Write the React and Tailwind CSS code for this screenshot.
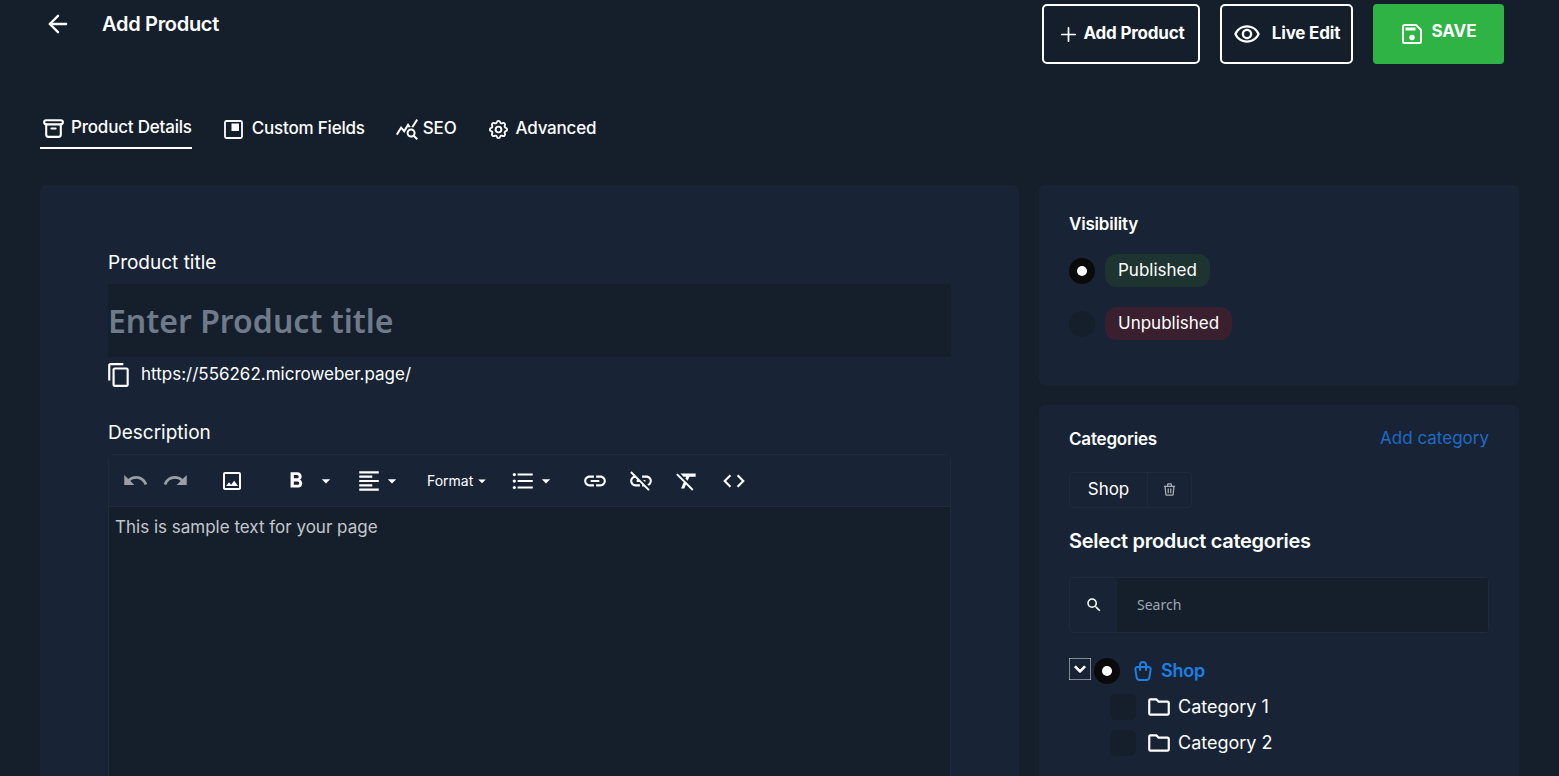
import React from "react";
import { ArrowLeft, Plus } from "lucide-react";
import {
  TbArchive,
  TbSettings,
  TbTrash,
  TbShoppingBag,
} from "react-icons/tb";
import {
  MdOutlineRemoveRedEye,
  MdQueryStats,
  MdOutlineContentCopy,
  MdUndo,
  MdRedo,
  MdOutlineImage,
  MdFormatBold,
  MdFormatAlignLeft,
  MdFormatListBulleted,
  MdLink,
  MdLinkOff,
  MdFormatClear,
  MdCode,
  MdSearch,
  MdOutlineFolder,
  MdKeyboardArrowDown,
  MdArrowDropDown,
} from "react-icons/md";

function SaveIcon() {
  return (
    <svg width="24" height="24" viewBox="0 0 24 24" fill="none" stroke="currentColor" strokeWidth="2">
      <path d="M3 4.5A1.5 1.5 0 0 1 4.500 3H16l5 5v11.500a1.500 1.500 0 0 1-1.500 1.500h-15A1.500 1.500 0 0 1 3 19.500z" />
      <rect x="5.500" y="5.500" width="10" height="3" fill="currentColor" stroke="none" />
      <circle cx="12" cy="15.500" r="2.700" fill="currentColor" stroke="none" />
    </svg>
  );
}

function FieldsIcon() {
  return (
    <svg width="19" height="19" viewBox="0 0 19 19" fill="none">
      <rect x="1" y="1" width="17" height="17" rx="1.500" stroke="currentColor" strokeWidth="1.800" />
      <rect x="7.500" y="3.500" width="7.500" height="7.500" fill="currentColor" />
    </svg>
  );
}

function Tab({ icon, label, active, gap }) {
  return (
    <div className={`flex h-[40px] items-center ${gap} ${active ? "border-b-2 border-white" : ""}`}>
      {icon}
      <span className="text-[17px] font-medium tracking-[-0.2px] text-white">{label}</span>
    </div>
  );
}

function Sep() {
  return <span className="h-[20px] w-px bg-[#22314a]" />;
}

function Radio({ checked }) {
  return (
    <span className={`flex h-[26px] w-[26px] shrink-0 items-center justify-center rounded-full ${checked ? "bg-[#0a0a0a]" : "bg-[#151f2b]"}`}>
      {checked && <span className="h-[10px] w-[10px] rounded-full bg-white" />}
    </span>
  );
}

function SubCategory({ label }) {
  return (
    <div className="flex h-[36px] items-center pl-[41px]">
      <span className="h-[26px] w-[26px] rounded-md bg-[#151f2b]" />
      <MdOutlineFolder className="ml-[10px] text-white" size={26} />
      <span className="ml-[6px] text-[18px] text-white">{label}</span>
    </div>
  );
}

export default function App() {
  return (
    <div className="h-[776px] overflow-hidden bg-[#151f2c] font-['Inter',sans-serif] text-white">
      {/* Header */}
      <div className="flex justify-between pl-[44px] pr-[55px] pt-1">
        <div className="flex h-[40px] items-center">
          <ArrowLeft size={28} strokeWidth={2} />
          <h1 className="ml-[30px] text-[20px] font-semibold tracking-[-0.3px]">Add Product</h1>
        </div>
        <div className="flex gap-5">
          <button className="flex h-[60px] w-[158px] items-center justify-center gap-[3px] rounded-[5px] border-2 border-white text-[17px] font-bold tracking-[-0.2px]">
            <Plus size={23} strokeWidth={1.800} />
            Add Product
          </button>
          <button className="flex h-[60px] w-[133px] items-center justify-center gap-[11px] rounded-[5px] border-2 border-white text-[17px] font-bold tracking-[-0.2px]">
            <MdOutlineRemoveRedEye size={28} />
            Live Edit
          </button>
          <button className="flex h-[60px] w-[131px] items-center justify-center gap-[7px] rounded-[4px] bg-[#2fb344] text-[17px] font-bold">
            <SaveIcon />
            <span className="-translate-y-[2px]">SAVE</span>
          </button>
        </div>
      </div>

      {/* Tabs */}
      <div className="mt-[45px] flex items-start pl-10">
        <Tab icon={<TbArchive size={25} />} label="Product Details" active gap="gap-[5px] pl-[1px]" />
        <div className="ml-[32px]">
          <Tab icon={<FieldsIcon />} label="Custom Fields" gap="gap-[9px]" />
        </div>
        <div className="ml-[30px]">
          <Tab icon={<MdQueryStats size={24} />} label="SEO" gap="gap-[4px]" />
        </div>
        <div className="ml-[31px]">
          <Tab icon={<TbSettings size={23} />} label="Advanced" gap="gap-[5px]" />
        </div>
      </div>

      {/* Main */}
      <div className="mt-[36px] flex gap-5 px-10">
        <div className="h-[700px] w-[979px] rounded-md bg-[#182435] px-[68px] pt-[64px]">
          <p className="text-[19px] leading-[28px]">Product title</p>
          <div className="mt-[7px] flex h-[73px] items-center bg-[#151f2b]">
            <span className="font-['Noto_Sans',sans-serif] text-[32px] font-semibold text-[#6f7b8a]">Enter Product title</span>
          </div>
          <div className="mt-[3px] flex h-[30px] items-center">
            <MdOutlineContentCopy size={26} className="-ml-[2px]" />
            <span className="ml-[9px] text-[17px]">https://556262.microweber.page/</span>
          </div>
          <p className="mt-[29px] text-[19px] leading-[28px]">Description</p>

          <div className="mt-[7px] h-[500px] rounded-t-md border border-[#1e2b3f]">
            <div className="flex h-[52px] items-center border-b border-[#1e2b3f] bg-[#182435] text-white">
              <MdUndo size={27} className="ml-[13px] text-[#9a9fa6]" />
              <MdRedo size={27} className="ml-[13px] text-[#9a9fa6]" />
              <span className="ml-[13px]"><Sep /></span>
              <MdOutlineImage size={24} className="ml-[18px]" />
              <span className="ml-[15px]"><Sep /></span>
              <MdFormatBold size={26} className="ml-[24px]" />
              <MdArrowDropDown size={20} className="ml-[7px]" />
              <span className="ml-[13px]"><Sep /></span>
              <MdFormatAlignLeft size={26} className="ml-[7px]" />
              <MdArrowDropDown size={20} />
              <span className="ml-[9px]"><Sep /></span>
              <span className="ml-[16px] text-[14px]">Format</span>
              <MdArrowDropDown size={18} />
              <MdFormatListBulleted size={26} className="ml-[19px]" />
              <MdArrowDropDown size={20} />
              <span className="ml-[9px]"><Sep /></span>
              <MdLink size={26} className="ml-[17px]" />
              <MdLinkOff size={26} className="ml-[20px]" />
              <MdFormatClear size={26} className="ml-[20px]" />
              <MdCode size={26} className="ml-[21px]" />
            </div>
            <div className="h-full bg-[#151f2b] px-[6px] pt-[8px] text-[17px] text-[#c4c7cb]">
              This is sample text for your page
            </div>
          </div>
        </div>

        <div className="w-[480px]">
          <div className="h-[200px] rounded-md bg-[#182435] px-[30px] pt-[27px]">
            <h3 className="text-[17px] font-semibold leading-[24px] tracking-[-0.2px]">Visibility</h3>
            <div className="mt-[18px] flex items-center gap-[10px]">
              <Radio checked />
              <span className="flex h-[33px] items-center rounded-[12px] bg-[#1d3430] px-[13px] text-[17px]">Published</span>
            </div>
            <div className="mt-[20px] flex items-center gap-[10px]">
              <Radio />
              <span className="flex h-[33px] items-center rounded-[12px] bg-[#3a202e] px-[13px] text-[17px]">Unpublished</span>
            </div>
          </div>

          <div className="mt-5 h-[400px] rounded-md bg-[#182435] px-[30px] pt-[21px]">
            <div className="flex items-center justify-between">
              <h3 className="text-[17px] font-semibold leading-[24px] tracking-[-0.2px]">Categories</h3>
              <a className="text-[17px] text-[#206bc4]">Add category</a>
            </div>
            <div className="mt-[20px] flex h-[36px] w-[123px] rounded border border-[#1f2b3d] text-[17px]">
              <span className="flex w-[78px] items-center justify-center border-r border-[#1f2b3d]">Shop</span>
              <span className="flex flex-1 items-center justify-center text-[#a9afb7]"><TbTrash size={15} /></span>
            </div>
            <h3 className="mt-[19px] text-[20px] font-semibold leading-[28px] tracking-[-0.3px]">Select product categories</h3>

            <div className="mt-[22px] flex h-[56px] rounded border border-[#1f2b3d]">
              <span className="flex w-[47px] items-center justify-center"><MdSearch size={18} /></span>
              <div className="flex flex-1 items-center bg-[#151f2b] pl-[20px] font-['Noto_Sans',sans-serif] text-[14px] text-[#9da6b0]">Search</div>
            </div>

            <div className="mt-[24px] flex h-[28px] items-center">
              <MdKeyboardArrowDown size={22} className="-translate-y-[2px] text-white" strokeWidth={1} />
              <span className="ml-[3px]"><Radio checked /></span>
              <TbShoppingBag size={24} className="ml-[11px] text-[#1e7fe0]" />
              <span className="ml-[6px] text-[18px] font-semibold tracking-[-0.2px] text-[#1b7fe6]">Shop</span>
            </div>
            <div className="mt-[4px]">
              <SubCategory label="Category 1" />
              <SubCategory label="Category 2" />
            </div>
          </div>
        </div>
      </div>
    </div>
  );
}
